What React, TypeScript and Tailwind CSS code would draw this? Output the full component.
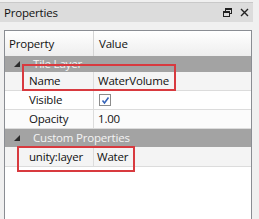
const font = { fontFamily: '"Open Sans", "Noto Sans", sans-serif' };

function GroupRow({ label, h }: { label: string; h: string }) {
  return (
    <div className={`flex items-center bg-[#a3a3a3] text-[#f4f4f4] text-[11.5px] tracking-[-0.2px] ${h}`}>
      <svg width="6" height="6" viewBox="0 0 6 6" className="ml-[9px] mr-[13px]">
        <polygon points="6,0 6,6 0,6" fill="#2b2b2b" />
      </svg>
      <span>{label}</span>
    </div>
  );
}

function PropRow({ name, bg, children }: { name: string; bg: string; children: React.ReactNode }) {
  return (
    <div className={`flex h-[19px] border-b border-[#dcdcdc] text-[11.5px] tracking-[-0.2px] text-[#111] ${bg}`}>
      <div className="w-[89px] pl-[24px] flex items-center border-r border-[#dcdcdc]">{name}</div>
      <div className="flex-1 pl-[4px] flex items-center">{children}</div>
    </div>
  );
}

export default function App() {
  return (
    <div className="relative w-[259px] h-[219px] bg-[#f0f0f0] overflow-hidden flex flex-col" style={font}>
      <div className="h-[3px] border-b border-[#c9c9c9] w-[253px]" />
      <div className="h-[19px] w-[253px] bg-[#dcdcdc] flex items-center pl-[4px] pr-[2px] text-[11.5px] tracking-[-0.2px] text-[#111]">
        <span className="flex-1">Properties</span>
        <svg width="9" height="9" viewBox="0 0 9 9" className="mr-[8px]">
          <rect x="2.5" y="0.5" width="6" height="5" fill="none" stroke="#222" />
          <rect x="2" y="0" width="7" height="2" fill="#222" />
          <rect x="0.5" y="3.5" width="6" height="5" fill="#dcdcdc" stroke="#222" />
          <rect x="0" y="3" width="7" height="2" fill="#222" />
        </svg>
        <svg width="9" height="9" viewBox="0 0 9 9" className="mr-[2px]">
          <path d="M1 1 L8 8 M8 1 L1 8" stroke="#222" strokeWidth="1.4" />
        </svg>
      </div>
      <div className="h-[8px]" />
      <div className="ml-[4px] w-[248px] flex-1 bg-white border border-b-0 border-[#8a8d93] flex flex-col">
        <div className="flex h-[25px] bg-gradient-to-b from-white to-[#eeeeee] text-[11.5px] tracking-[-0.2px] text-[#111]">
          <div className="w-[89px] pl-[4px] flex items-center border-r border-[#d5d5d5]">Property</div>
          <div className="flex-1 pl-[5px] flex items-center">Value</div>
        </div>
        <GroupRow label="Tile Layer" h="h-[16px]" />
        <PropRow name="Name" bg="bg-[#f4f4f4]">WaterVolume</PropRow>
        <PropRow name="Visible" bg="bg-white">
          <span className="ml-[1px] w-[12px] h-[12px] border border-[#8c8c8c] bg-white flex items-center justify-center">
            <svg width="9" height="9" viewBox="0 0 9 9">
              <path d="M1.5 4.5 L3.5 7 L7.5 1.5" fill="none" stroke="#3563b8" strokeWidth="1.6" />
            </svg>
          </span>
        </PropRow>
        <PropRow name="Opacity" bg="bg-[#fbfbfb]">1.00</PropRow>
        <GroupRow label="Custom Properties" h="h-[18px]" />
        <div className="flex h-[20px] border-b border-[#dcdcdc] text-[11.5px] tracking-[-0.2px] text-[#111] bg-[#f4f4f4]">
          <div className="w-[89px] pl-[24px] flex items-center border-r border-[#dcdcdc]">unity:layer</div>
          <div className="flex-1 pl-[3px] flex items-center">Water</div>
        </div>
      </div>
      <div className="absolute left-[22px] top-[64px] w-[154px] h-[27px] border-2 border-[#d83a3f]" />
      <div className="absolute left-[17px] top-[146px] w-[118px] h-[26px] border-2 border-[#d83a3f]" />
    </div>
  );
}
